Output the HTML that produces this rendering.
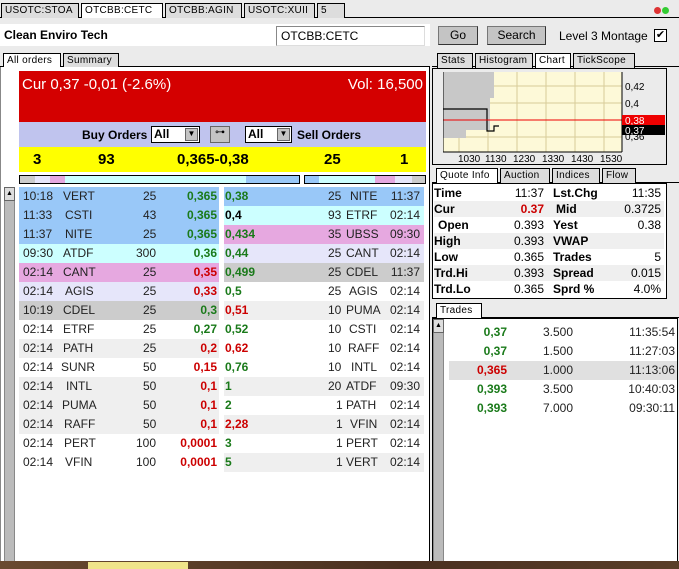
<!DOCTYPE html><html><head><style>
*{margin:0;padding:0;box-sizing:border-box}
body{width:679px;height:569px;background:#ebebeb;font-family:"Liberation Sans",sans-serif;position:relative;overflow:hidden;font-size:12px}
.a{position:absolute}
.tab{position:absolute;height:15px;border:1px solid #000;border-bottom:none;background:#ddd;font-size:10px;letter-spacing:.3px;padding:1px 3px;line-height:12px;white-space:nowrap;overflow:hidden}
.tab.on{background:#fff}
.row{position:absolute;height:19px;line-height:19px;font-size:12px;color:#222}
.row span{position:absolute}
.g{color:#1a7a1a;font-weight:bold}.r{color:#c00;font-weight:bold}.k{color:#000;font-weight:bold}
.btn{position:absolute;background:#c4c4c4;border:1px solid #777;border-right-color:#333;border-bottom-color:#333;text-align:center;font-size:12px;line-height:17px}
.q{position:absolute;left:434px;width:230px;height:16px;line-height:16px;font-size:12px}
.q span{position:absolute}
</style></head><body>
<div class="a" style="left:0;top:17px;width:679px;height:1px;background:#000"></div>
<div class="tab" style="left:1px;top:3px;width:78px">USOTC:STOA</div>
<div class="tab on" style="left:81px;top:3px;width:82px;height:15px">OTCBB:CETC</div>
<div class="tab" style="left:165px;top:3px;width:77px">OTCBB:AGIN</div>
<div class="tab" style="left:244px;top:3px;width:71px">USOTC:XUII</div>
<div class="tab" style="left:317px;top:3px;width:28px">5</div>
<div class="a" style="left:654px;top:7px;width:7px;height:7px;border-radius:50%;background:#d33"></div>
<div class="a" style="left:662px;top:7px;width:7px;height:7px;border-radius:50%;background:#3c3"></div>
<div class="a" style="left:0;top:24px;width:430px;height:22px;background:#fff"></div>
<div class="a" style="left:4px;top:28px;font-weight:bold;font-size:12px">Clean Enviro Tech</div>
<div class="a" style="left:276px;top:26px;width:149px;height:20px;background:#fff;border:1px solid #888;border-bottom-color:#ddd;border-right-color:#ddd;font-size:12px;padding:2px 4px">OTCBB:CETC</div>
<div class="btn" style="left:438px;top:26px;width:40px;height:19px">Go</div>
<div class="btn" style="left:487px;top:26px;width:59px;height:19px">Search</div>
<div class="a" style="left:559px;top:29px;font-size:12px">Level 3 Montage</div>
<div class="a" style="left:654px;top:29px;width:13px;height:13px;border:1px solid #000;background:#fff;font-size:11px;line-height:11px;text-align:center">✔</div>
<div class="a" style="left:0;top:66px;width:430px;height:1px;background:#000"></div>
<div class="tab on" style="left:3px;top:53px;width:58px">All orders</div>
<div class="tab" style="left:63px;top:53px;width:56px">Summary</div>
<div class="a" style="left:0;top:67px;width:430px;height:495px;border-right:1px solid #000;border-left:1px solid #888;background:#fff"></div>
<div class="a" style="left:19px;top:71px;width:407px;height:51px;background:#d40000;color:#fff;font-size:15px;padding:5px 3px">Cur 0,37 -0,01 (-2.6%)<span style="position:absolute;right:3px;top:5px">Vol: 16,500</span></div>
<div class="a" style="left:19px;top:122px;width:407px;height:25px;background:#c0c4ee"></div>
<div class="a" style="left:82px;top:128px;font-weight:bold;font-size:12px">Buy Orders</div>
<div class="a" style="left:151px;top:126px;width:49px;height:17px;background:#fff;border:1px solid #000;font-weight:bold;font-size:12px;padding-left:2px">All<span style="position:absolute;right:1px;top:1px;width:13px;height:13px;background:#c4c4c4;border:1px solid #666;font-size:8px;text-align:center">▼</span></div>
<div class="a" style="left:210px;top:126px;width:20px;height:17px;background:#c4c4c4;border:1px solid #666;font-size:10px;text-align:center">⊶</div>
<div class="a" style="left:245px;top:126px;width:47px;height:17px;background:#fff;border:1px solid #000;font-weight:bold;font-size:12px;padding-left:2px">All<span style="position:absolute;right:1px;top:1px;width:13px;height:13px;background:#c4c4c4;border:1px solid #666;font-size:8px;text-align:center">▼</span></div>
<div class="a" style="left:297px;top:128px;font-weight:bold;font-size:12px">Sell Orders</div>
<div class="a" style="left:19px;top:147px;width:407px;height:25px;background:#ffff00;font-size:15px;font-weight:bold"><span class="a" style="left:14px;top:4px">3</span><span class="a" style="left:79px;top:4px">93</span><span class="a" style="left:158px;top:4px">0,365-0,38</span><span class="a" style="left:305px;top:4px">25</span><span class="a" style="left:381px;top:4px">1</span></div>
<div class="a" style="left:19px;top:175px;width:281px;height:9px;border:1px solid #000;background:linear-gradient(90deg,#ccc 0 15px,#e6e6fa 15px 30px,#e6a8e0 30px 45px,#ccffff 45px 226px,#99c8f8 226px)"></div>
<div class="a" style="left:304px;top:175px;width:122px;height:9px;border:1px solid #000;background:linear-gradient(90deg,#99c8f8 0 14px,#ccffff 14px 70px,#e6a8e0 70px 90px,#e6e6fa 90px 107px,#ccc 107px)"></div>
<div class="a" style="left:4px;top:187px;width:11px;height:375px;background:#bbb;border:1px solid #888"></div>
<div class="a" style="left:4px;top:187px;width:11px;height:14px;background:#ddd;border:1px solid #666;font-size:7px;text-align:center;line-height:12px">▲</div>

<div class="row" style="left:19px;top:187px;width:200px;background:#99c8f8"><span style="left:4px">10:18</span><span style="left:44px">VERT</span><span style="left:124px">25</span><span class="g" style="right:2px">0,365</span></div>
<div class="row" style="left:224px;top:187px;width:200px;background:#99c8f8"><span class="g" style="left:1px">0,38</span><span style="left:104px">25</span><span style="left:126px">NITE</span><span style="right:4px">11:37</span></div>
<div class="row" style="left:19px;top:206px;width:200px;background:#99c8f8"><span style="left:4px">11:33</span><span style="left:46px">CSTI</span><span style="left:124px">43</span><span class="g" style="right:2px">0,365</span></div>
<div class="row" style="left:224px;top:206px;width:200px;background:#ccffff"><span class="k" style="left:1px">0,4</span><span style="left:104px">93</span><span style="left:122px">ETRF</span><span style="right:4px">02:14</span></div>
<div class="row" style="left:19px;top:225px;width:200px;background:#99c8f8"><span style="left:4px">11:37</span><span style="left:46px">NITE</span><span style="left:124px">25</span><span class="g" style="right:2px">0,365</span></div>
<div class="row" style="left:224px;top:225px;width:200px;background:#e6a8e0"><span class="g" style="left:1px">0,434</span><span style="left:104px">35</span><span style="left:122px">UBSS</span><span style="right:4px">09:30</span></div>
<div class="row" style="left:19px;top:244px;width:200px;background:#ccffff"><span style="left:4px">09:30</span><span style="left:44px">ATDF</span><span style="left:117px">300</span><span class="g" style="right:2px">0,36</span></div>
<div class="row" style="left:224px;top:244px;width:200px;background:#e6e6fa"><span class="g" style="left:1px">0,44</span><span style="left:104px">25</span><span style="left:122px">CANT</span><span style="right:4px">02:14</span></div>
<div class="row" style="left:19px;top:263px;width:200px;background:#e6a8e0"><span style="left:4px">02:14</span><span style="left:44px">CANT</span><span style="left:124px">25</span><span class="r" style="right:2px">0,35</span></div>
<div class="row" style="left:224px;top:263px;width:200px;background:#ccc"><span class="g" style="left:1px">0,499</span><span style="left:104px">25</span><span style="left:122px">CDEL</span><span style="right:4px">11:37</span></div>
<div class="row" style="left:19px;top:282px;width:200px;background:#e6e6fa"><span style="left:4px">02:14</span><span style="left:46px">AGIS</span><span style="left:124px">25</span><span class="r" style="right:2px">0,33</span></div>
<div class="row" style="left:224px;top:282px;width:200px;background:#fff"><span class="g" style="left:1px">0,5</span><span style="left:104px">25</span><span style="left:125px">AGIS</span><span style="right:4px">02:14</span></div>
<div class="row" style="left:19px;top:301px;width:200px;background:#ccc"><span style="left:4px">10:19</span><span style="left:44px">CDEL</span><span style="left:124px">25</span><span class="g" style="right:2px">0,3</span></div>
<div class="row" style="left:224px;top:301px;width:200px;background:#efefef"><span class="r" style="left:1px">0,51</span><span style="left:104px">10</span><span style="left:122px">PUMA</span><span style="right:4px">02:14</span></div>
<div class="row" style="left:19px;top:320px;width:200px;background:#fff"><span style="left:4px">02:14</span><span style="left:44px">ETRF</span><span style="left:124px">25</span><span class="g" style="right:2px">0,27</span></div>
<div class="row" style="left:224px;top:320px;width:200px;background:#fff"><span class="g" style="left:1px">0,52</span><span style="left:104px">10</span><span style="left:125px">CSTI</span><span style="right:4px">02:14</span></div>
<div class="row" style="left:19px;top:339px;width:200px;background:#efefef"><span style="left:4px">02:14</span><span style="left:44px">PATH</span><span style="left:124px">25</span><span class="r" style="right:2px">0,2</span></div>
<div class="row" style="left:224px;top:339px;width:200px;background:#fff"><span class="r" style="left:1px">0,62</span><span style="left:104px">10</span><span style="left:124px">RAFF</span><span style="right:4px">02:14</span></div>
<div class="row" style="left:19px;top:358px;width:200px;background:#fff"><span style="left:4px">02:14</span><span style="left:42px">SUNR</span><span style="left:124px">50</span><span class="r" style="right:2px">0,15</span></div>
<div class="row" style="left:224px;top:358px;width:200px;background:#fff"><span class="g" style="left:1px">0,76</span><span style="left:104px">10</span><span style="left:127px">INTL</span><span style="right:4px">02:14</span></div>
<div class="row" style="left:19px;top:377px;width:200px;background:#efefef"><span style="left:4px">02:14</span><span style="left:47px">INTL</span><span style="left:124px">50</span><span class="r" style="right:2px">0,1</span></div>
<div class="row" style="left:224px;top:377px;width:200px;background:#efefef"><span class="g" style="left:1px">1</span><span style="left:104px">20</span><span style="left:122px">ATDF</span><span style="right:4px">09:30</span></div>
<div class="row" style="left:19px;top:396px;width:200px;background:#efefef"><span style="left:4px">02:14</span><span style="left:43px">PUMA</span><span style="left:124px">50</span><span class="r" style="right:2px">0,1</span></div>
<div class="row" style="left:224px;top:396px;width:200px;background:#fff"><span class="g" style="left:1px">2</span><span style="left:112px">1</span><span style="left:122px">PATH</span><span style="right:4px">02:14</span></div>
<div class="row" style="left:19px;top:415px;width:200px;background:#efefef"><span style="left:4px">02:14</span><span style="left:45px">RAFF</span><span style="left:124px">50</span><span class="r" style="right:2px">0,1</span></div>
<div class="row" style="left:224px;top:415px;width:200px;background:#efefef"><span class="r" style="left:1px">2,28</span><span style="left:112px">1</span><span style="left:126px">VFIN</span><span style="right:4px">02:14</span></div>
<div class="row" style="left:19px;top:434px;width:200px;background:#fff"><span style="left:4px">02:14</span><span style="left:45px">PERT</span><span style="left:117px">100</span><span class="r" style="right:2px">0,0001</span></div>
<div class="row" style="left:224px;top:434px;width:200px;background:#fff"><span class="g" style="left:1px">3</span><span style="left:112px">1</span><span style="left:122px">PERT</span><span style="right:4px">02:14</span></div>
<div class="row" style="left:19px;top:453px;width:200px;background:#fff"><span style="left:4px">02:14</span><span style="left:46px">VFIN</span><span style="left:117px">100</span><span class="r" style="right:2px">0,0001</span></div>
<div class="row" style="left:224px;top:453px;width:200px;background:#efefef"><span class="g" style="left:1px">5</span><span style="left:112px">1</span><span style="left:122px">VERT</span><span style="right:4px">02:14</span></div>

<div class="a" style="left:432px;top:66px;width:247px;height:1px;background:#000"></div>
<div class="tab" style="left:437px;top:53px;width:36px">Stats</div>
<div class="tab" style="left:475px;top:53px;width:58px">Histogram</div>
<div class="tab on" style="left:535px;top:53px;width:36px">Chart</div>
<div class="tab" style="left:573px;top:53px;width:62px">TickScope</div>
<div class="a" style="left:432px;top:68px;width:235px;height:97px;border:1px solid #000;background:#ebebeb"></div>
<svg class="a" style="left:443px;top:72px" width="224" height="92">
<rect x="0" y="0" width="179" height="80" fill="#fdf9d8"/>
<g stroke="#d8cc99" stroke-width="1">
<line x1="16" y1="0" x2="16" y2="80"/><line x1="45" y1="0" x2="45" y2="80"/><line x1="74" y1="0" x2="74" y2="80"/><line x1="103" y1="0" x2="103" y2="80"/><line x1="132" y1="0" x2="132" y2="80"/><line x1="161" y1="0" x2="161" y2="80"/>
<line x1="0" y1="14" x2="179" y2="14"/><line x1="0" y1="31" x2="179" y2="31"/><line x1="0" y1="48" x2="179" y2="48"/><line x1="0" y1="65" x2="179" y2="65"/>
</g>
<polygon points="0,0 51,0 51,26 47,26 47,58 23,58 23,66 0,66" fill="#c8c8c8"/>
<polyline points="0,37 44,37 44,59 51,59 51,54 56,54" fill="none" stroke="#000" stroke-width="1.2"/>
<line x1="0" y1="48" x2="179" y2="48" stroke="#e00" stroke-width="1"/>
<line x1="0" y1="0" x2="0" y2="80" stroke="#000"/><line x1="0" y1="80" x2="179" y2="80" stroke="#000"/><line x1="179" y1="0" x2="179" y2="80" stroke="#000"/>
<g font-size="10" font-family="Liberation Sans">
<text x="182" y="18">0,42</text><text x="182" y="35">0,4</text><text x="182" y="68">0,36</text>
<rect x="179" y="43" width="43" height="10" fill="#e00"/><text x="182" y="52" fill="#fff">0,38</text>
<rect x="179" y="53" width="43" height="10" fill="#000"/><text x="182" y="62" fill="#fff">0,37</text>
<text x="15" y="90">1030</text><text x="42" y="90">1130</text><text x="70" y="90">1230</text><text x="99" y="90">1330</text><text x="128" y="90">1430</text><text x="157" y="90">1530</text>
</g></svg>
<div class="a" style="left:432px;top:182px;width:247px;height:1px;background:#000"></div>
<div class="tab on" style="left:436px;top:168px;width:62px">Quote Info</div>
<div class="tab" style="left:500px;top:168px;width:50px">Auction</div>
<div class="tab" style="left:552px;top:168px;width:48px">Indices</div>
<div class="tab" style="left:602px;top:168px;width:34px">Flow</div>
<div class="a" style="left:432px;top:183px;width:235px;height:116px;border:1px solid #000;background:#fff"></div>
<div class="q" style="top:185px"><span style="font-weight:bold">Time</span><span style="right:120px">11:37</span><span style="left:119px;font-weight:bold">Lst.Chg</span><span style="right:3px">11:35</span></div>
<div class="q" style="top:201px;background:#efefef"><span style="font-weight:bold">Cur</span><span style="right:120px;color:#c00;font-weight:bold">0.37</span><span style="left:122px;font-weight:bold">Mid</span><span style="right:3px">0.3725</span></div>
<div class="q" style="top:217px"><span style="left:4px;font-weight:bold">Open</span><span style="right:120px">0.393</span><span style="left:119px;font-weight:bold">Yest</span><span style="right:3px">0.38</span></div>
<div class="q" style="top:233px;background:#efefef"><span style="font-weight:bold">High</span><span style="right:120px">0.393</span><span style="left:119px;font-weight:bold">VWAP</span></div>
<div class="q" style="top:249px"><span style="font-weight:bold">Low</span><span style="right:120px">0.365</span><span style="left:119px;font-weight:bold">Trades</span><span style="right:3px">5</span></div>
<div class="q" style="top:265px;background:#efefef"><span style="font-weight:bold">Trd.Hi</span><span style="right:120px">0.393</span><span style="left:119px;font-weight:bold">Spread</span><span style="right:3px">0.015</span></div>
<div class="q" style="top:281px"><span style="font-weight:bold">Trd.Lo</span><span style="right:120px">0.365</span><span style="left:119px;font-weight:bold">Sprd %</span><span style="right:3px">4.0%</span></div>
<div class="a" style="left:432px;top:317px;width:247px;height:1px;background:#000"></div>
<div class="tab on" style="left:436px;top:303px;width:46px">Trades</div>
<div class="a" style="left:432px;top:318px;width:246px;height:244px;border:1px solid #000;background:#fff"></div>
<div class="a" style="left:433px;top:319px;width:11px;height:243px;background:#bbb;border:1px solid #888"></div>
<div class="a" style="left:433px;top:319px;width:11px;height:14px;background:#ddd;border:1px solid #666;font-size:7px;text-align:center;line-height:12px">▲</div>
<div class="row" style="left:449px;top:323px;width:228px"><span class="g" style="right:170px">0,37</span><span style="left:94px">3.500</span><span style="right:2px">11:35:54</span></div>
<div class="row" style="left:449px;top:342px;width:228px"><span class="g" style="right:170px">0,37</span><span style="left:94px">1.500</span><span style="right:2px">11:27:03</span></div>
<div class="row" style="left:449px;top:361px;width:228px;background:#e0e0e0"><span class="r" style="right:170px">0,365</span><span style="left:94px">1.000</span><span style="right:2px">11:13:06</span></div>
<div class="row" style="left:449px;top:380px;width:228px"><span class="g" style="right:170px">0,393</span><span style="left:94px">3.500</span><span style="right:2px">10:40:03</span></div>
<div class="row" style="left:449px;top:399px;width:228px"><span class="g" style="right:170px">0,393</span><span style="left:94px">7.000</span><span style="right:2px">09:30:11</span></div>
<div class="a" style="left:0;top:561px;width:679px;height:8px;background:linear-gradient(90deg,#6a4a30,#4a3020 60%,#5a3e28)"></div>
<div class="a" style="left:88px;top:562px;width:100px;height:7px;background:#f0e48a"></div>
</body></html>
